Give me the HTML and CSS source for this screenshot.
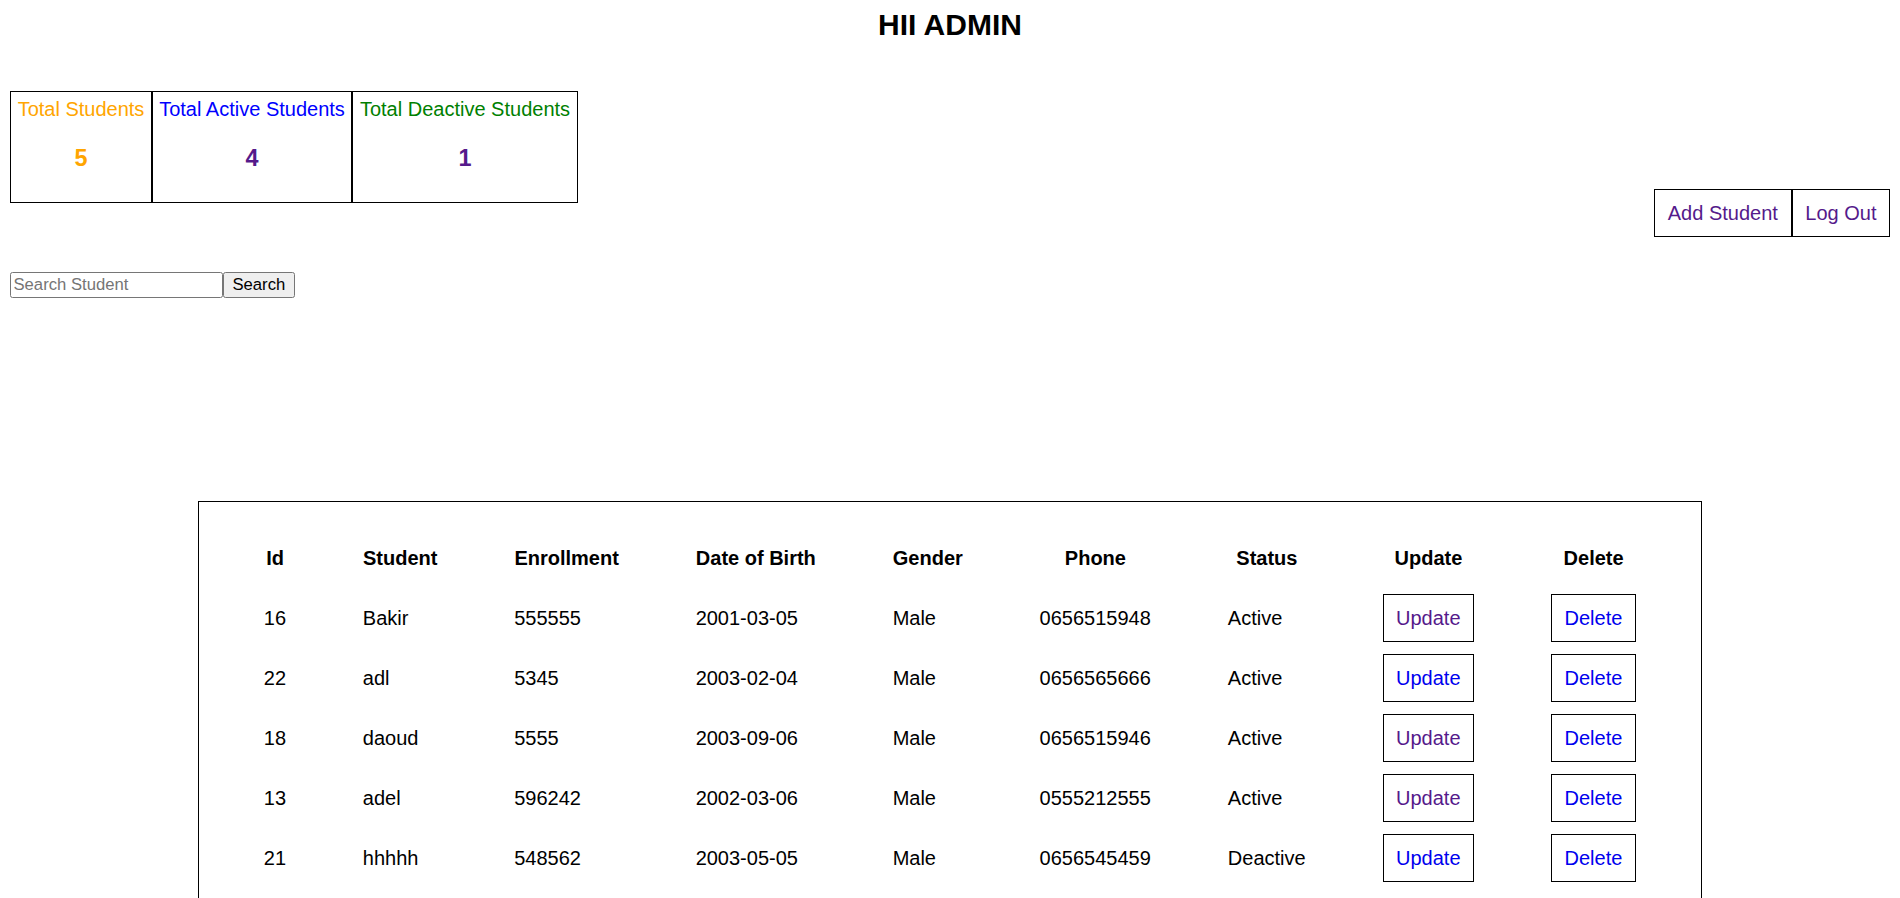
FILE: index.html
```html
<!DOCTYPE html>
<html lang="en">
<head>
<meta charset="utf-8">
<title>Admin</title>
<link rel="stylesheet" href="styles.css">
</head>
<body>
<h1 class="title">HII ADMIN</h1>
<div class="top-row">
  <div class="cards">
    <div class="card card-total">
      <div class="card-label label-orange">Total Students</div>
      <h3 class="card-value value-orange">5</h3>
    </div>
    <div class="card card-active">
      <div class="card-label label-blue">Total Active Students</div>
      <h3 class="card-value value-purple">4</h3>
    </div>
    <div class="card card-deactive">
      <div class="card-label label-green">Total Deactive Students</div>
      <h3 class="card-value value-purple">1</h3>
    </div>
  </div>
  <div class="actions">
    <a class="action-link" href="#add">Add Student</a><a class="action-link" href="#logout">Log Out</a>
  </div>
</div>
<form class="search-row">
  <input class="search-input" type="text" placeholder="Search Student"><button class="search-button" type="button">Search</button>
</form>
<div class="table-box">
  <table class="students">
    <thead>
      <tr><th>Id</th><th>Student</th><th>Enrollment</th><th>Date of Birth</th><th>Gender</th><th>Phone</th><th>Status</th><th>Update</th><th>Delete</th></tr>
    </thead>
    <tbody>
      <tr><td>16</td><td>Bakir</td><td>555555</td><td>2001-03-05</td><td>Male</td><td>0656515948</td><td>Active</td><td><a class="cell-btn visited" href="#u16">Update</a></td><td><a class="cell-btn" href="#d16">Delete</a></td></tr>
      <tr><td>22</td><td>adl</td><td>5345</td><td>2003-02-04</td><td>Male</td><td>0656565666</td><td>Active</td><td><a class="cell-btn" href="#u22">Update</a></td><td><a class="cell-btn" href="#d22">Delete</a></td></tr>
      <tr><td>18</td><td>daoud</td><td>5555</td><td>2003-09-06</td><td>Male</td><td>0656515946</td><td>Active</td><td><a class="cell-btn visited" href="#u18">Update</a></td><td><a class="cell-btn" href="#d18">Delete</a></td></tr>
      <tr><td>13</td><td>adel</td><td>596242</td><td>2002-03-06</td><td>Male</td><td>0555212555</td><td>Active</td><td><a class="cell-btn visited" href="#u13">Update</a></td><td><a class="cell-btn" href="#d13">Delete</a></td></tr>
      <tr><td>21</td><td>hhhhh</td><td>548562</td><td>2003-05-05</td><td>Male</td><td>0656545459</td><td>Deactive</td><td><a class="cell-btn" href="#u21">Update</a></td><td><a class="cell-btn" href="#d21">Delete</a></td></tr>
    </tbody>
  </table>
</div>
</body>
</html>
```
FILE: styles.css
```css
html {
  scrollbar-width: none;
}
body {
  margin: 8px 10px 10px;
  font-family: "Liberation Sans", Arial, sans-serif;
  font-size: 20px;
  color: #000;
  background: #fff;
}
.title {
  margin: 0 0 48.5px;
  font-size: 30px;
  font-weight: bold;
  text-align: center;
  line-height: 34.5px;
}
.top-row {
  display: flex;
  justify-content: space-between;
  align-items: flex-start;
}
.cards {
  display: flex;
}
.card {
  box-sizing: border-box;
  border: 1px solid #000;
  padding: 5.5px 0 7.5px;
  text-align: center;
  white-space: nowrap;
}
.card-total { width: 142px; }
.card-active { width: 200px; }
.card-deactive { width: 226px; }
.card-label {
  line-height: 23px;
}
.label-orange { color: #ffa500; }
.label-blue { color: #0000ff; }
.label-green { color: #008000; }
.card-value {
  margin: 24px 0 22.8px;
  font-size: 23.4px;
  line-height: 26.9px;
  font-weight: bold;
}
.value-orange { color: #ffa500; }
.value-purple { color: #551a8b; }
.actions {
  display: flex;
  margin-top: 98px;
}
.action-link {
  display: block;
  border: 1px solid #000;
  padding: 11.5px 13px;
  line-height: 23px;
  color: #551a8b;
  text-decoration: none;
}
.action-link + .action-link {
  padding: 11.5px 12.5px;
}
.search-row {
  display: flex;
  margin: 35px 0 0;
}
.search-input {
  box-sizing: border-box;
  width: 212.5px;
  height: 26px;
  margin: 0;
  padding: 1.25px 2.5px;
  border: 1px solid #767676;
  border-radius: 2.5px;
  font-family: "Liberation Sans", Arial, sans-serif;
  font-size: 16.67px;
  color: #000;
  background: #fff;
}
.search-input::placeholder {
  color: #757575;
}
.search-button {
  box-sizing: border-box;
  width: 72.7px;
  height: 26px;
  margin: 0;
  padding: 1.25px 7.5px;
  border: 1px solid #767676;
  border-radius: 2.5px;
  background: #efefef;
  font-family: "Liberation Sans", Arial, sans-serif;
  font-size: 16.67px;
  color: #000;
}
.table-box {
  width: 80%;
  margin: 202.5px auto 0;
  padding: 25px;
  box-sizing: border-box;
  border: 1px solid #000;
}
.students {
  width: 100%;
  border-collapse: separate;
  border-spacing: 3px;
  font-size: 20px;
}
.students th {
  padding: 17px 36.8px;
  line-height: 23px;
  font-weight: bold;
  text-align: center;
  white-space: nowrap;
}
.students td {
  padding: 4.5px 36.8px;
  line-height: 23px;
  text-align: left;
  white-space: nowrap;
}
.cell-btn {
  display: inline-block;
  vertical-align: middle;
  border: 1px solid #000;
  padding: 11.5px 12.5px;
  line-height: 23px;
  color: #0000ee;
  text-decoration: none;
}
.cell-btn.visited {
  color: #551a8b;
}
```
